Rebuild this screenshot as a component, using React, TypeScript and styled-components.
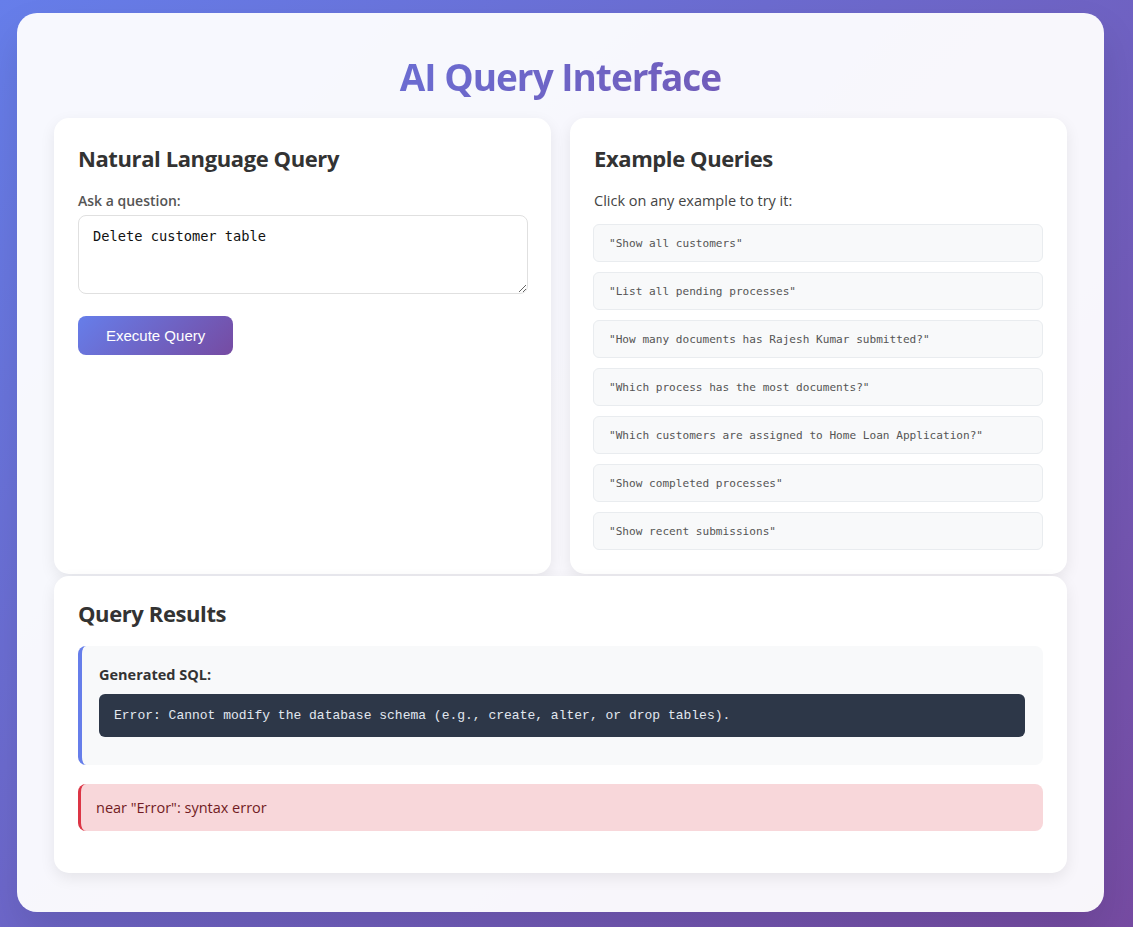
import React from "react";
import styled, { createGlobalStyle } from "styled-components";

const GlobalStyle = createGlobalStyle`
  html, body { margin: 0; padding: 0; }
  body {
    min-height: 927px;
    background: linear-gradient(135deg, #667eea 0%, #764ba2 100%);
    font-family: "Open Sans", "Noto Sans", sans-serif;
    color: #333;
  }
  * { box-sizing: border-box; }
`;

const Page = styled.div`
  padding: 13px 0 15px 17px;
`;

const Container = styled.div`
  width: 1087px;
  height: 899px;
  background: rgba(255, 255, 255, 0.95);
  border-radius: 20px;
  box-shadow: 0 20px 40px rgba(0, 0, 0, 0.1);
  padding: 40px 37px 39px;
  display: flex;
  flex-direction: column;
`;

const Title = styled.h1`
  margin: 0 0 17px;
  text-align: center;
  font-size: 37px;
  line-height: 48px;
  letter-spacing: -1px;
  font-weight: 700;
  background: linear-gradient(135deg, #667eea 0%, #764ba2 100%);
  -webkit-background-clip: text;
  background-clip: text;
  color: transparent;
`;

const TopGrid = styled.div`
  display: grid;
  grid-template-columns: 497px 497px;
  column-gap: 19px;
`;

const Card = styled.section<{ $top?: number }>`
  background: #fff;
  border-radius: 15px;
  box-shadow: 0 5px 15px rgba(0, 0, 0, 0.08);
  padding: ${(p) => p.$top ?? 24}px 24px 24px;
`;

const ResultsCard = styled(Card)`
  margin-top: 2px;
  padding-bottom: 42px;
`;

const CardTitle = styled.h2`
  margin: 0 0 18px;
  font-size: 22px;
  line-height: 30px;
  letter-spacing: -0.4px;
  font-weight: 700;
  color: #333;
`;

const Label = styled.label`
  display: block;
  font-size: 14px;
  line-height: 20px;
  font-weight: 600;
  color: #555;
  margin-bottom: 4px;
`;

const TextArea = styled.textarea`
  display: block;
  width: 450px;
  height: 79px;
  border: 1px solid #e0e0e0;
  border-radius: 8px;
  padding: 11px 14px;
  font-family: "DejaVu Sans Mono", monospace;
  font-size: 13.7px;
  line-height: 18px;
  color: #111;
  background: #fff;
  resize: vertical;
  outline: none;
`;

const Button = styled.button`
  margin-top: 22px;
  height: 39px;
  padding: 0 28px;
  border: none;
  border-radius: 8px;
  background: linear-gradient(135deg, #667eea 0%, #764ba2 100%);
  color: #fff;
  font-family: "Liberation Sans", Arial, sans-serif;
  font-size: 15px;
  cursor: pointer;
`;

const Hint = styled.p`
  margin: 0 0 13px;
  font-size: 14.5px;
  line-height: 20px;
  color: #444;
`;

const ExampleList = styled.div`
  display: flex;
  flex-direction: column;
  gap: 10px;
  margin-left: -1px;
`;

const Example = styled.div`
  height: 38px;
  display: flex;
  align-items: center;
  padding: 0 15px;
  background: #f8f9fa;
  border: 1px solid #e9ecef;
  border-radius: 6px;
  font-family: "DejaVu Sans Mono", monospace;
  font-size: 11.1px;
  color: #555;
  cursor: pointer;
`;

const SqlBox = styled.div`
  background: #f8f9fa;
  border-left: 4px solid #667eea;
  border-radius: 8px;
  padding: 19px 18px 28px 17px;
`;

const SqlLabel = styled.div`
  font-size: 14.5px;
  line-height: 20px;
  font-weight: 700;
  color: #333;
  margin-bottom: 9px;
`;

const Code = styled.pre`
  margin: 0;
  height: 43px;
  display: flex;
  align-items: center;
  padding: 0 15px;
  background: #2d3748;
  border-radius: 6px;
  color: #e2e8f0;
  font-family: "Liberation Mono", "Courier New", monospace;
  font-size: 13px;
`;

const ErrorBox = styled.div`
  margin-top: 19px;
  height: 47px;
  display: flex;
  align-items: center;
  padding: 0 15px;
  background: #f8d7da;
  border-left: 3px solid #dc3545;
  border-radius: 8px;
  color: #721c24;
  font-size: 14.5px;
`;

const examples = [
  "Show all customers",
  "List all pending processes",
  "How many documents has Rajesh Kumar submitted?",
  "Which process has the most documents?",
  "Which customers are assigned to Home Loan Application?",
  "Show completed processes",
  "Show recent submissions",
];

export default function App() {
  return (
    <>
      <GlobalStyle />
      <Page>
        <Container>
          <Title>AI Query Interface</Title>
          <TopGrid>
            <Card $top={25}>
              <CardTitle>Natural Language Query</CardTitle>
              <Label htmlFor="q">Ask a question:</Label>
              <TextArea id="q" defaultValue="Delete customer table" />
              <Button>Execute Query</Button>
            </Card>
            <Card $top={25}>
              <CardTitle>Example Queries</CardTitle>
              <Hint>Click on any example to try it:</Hint>
              <ExampleList>
                {examples.map((e) => (
                  <Example key={e}>"{e}"</Example>
                ))}
              </ExampleList>
            </Card>
          </TopGrid>
          <ResultsCard $top={22}>
            <CardTitle>Query Results</CardTitle>
            <SqlBox>
              <SqlLabel>Generated SQL:</SqlLabel>
              <Code>Error: Cannot modify the database schema (e.g., create, alter, or drop tables).</Code>
            </SqlBox>
            <ErrorBox>near "Error": syntax error</ErrorBox>
          </ResultsCard>
        </Container>
      </Page>
    </>
  );
}
